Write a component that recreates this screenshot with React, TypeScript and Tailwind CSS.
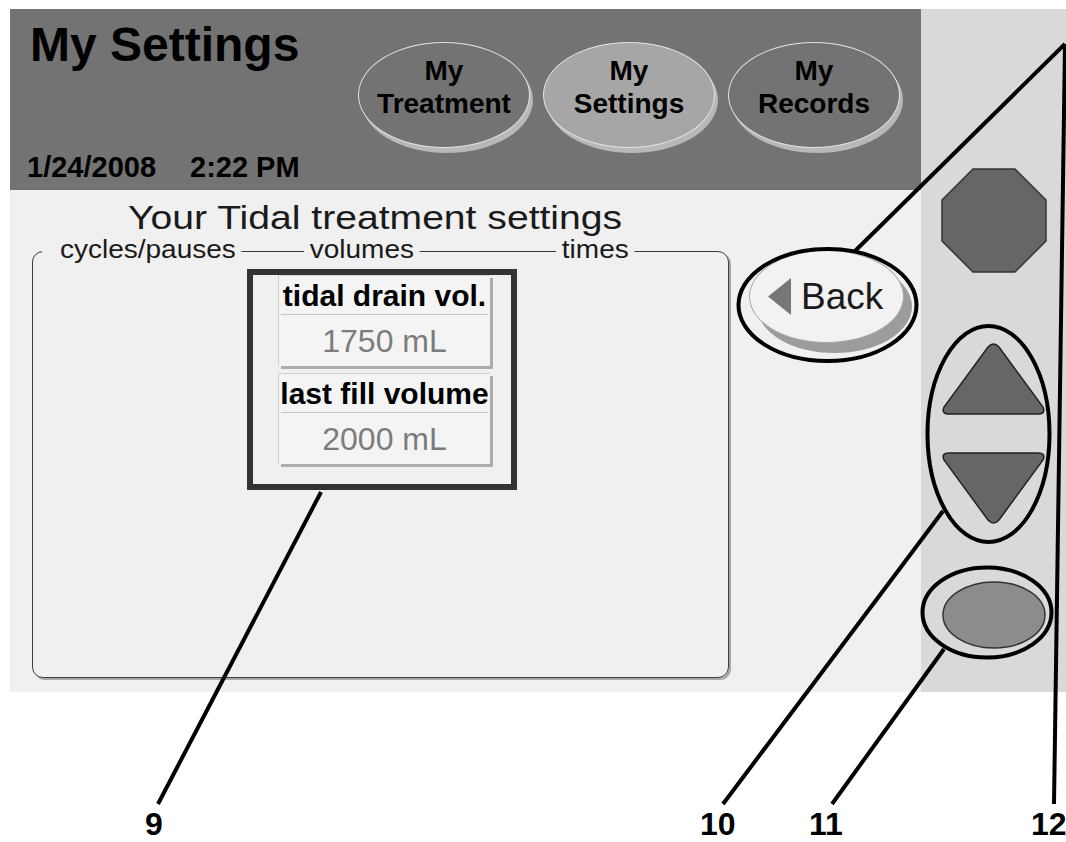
import React from 'react';

const tabs = [
    { top: 'My', bottom: 'Treatment', active: false },
    { top: 'My', bottom: 'Settings', active: true },
    { top: 'My', bottom: 'Records', active: false }
];

const tiles = [
    { label: 'tidal drain vol.', value: '1750 mL' },
    { label: 'last fill volume', value: '2000 mL' }
];

const Tab: React.FC<{ top: string; bottom: string; active: boolean }> = ({ top, bottom, active }) => (
    <div
        className={`w-[172px] h-[106px] rounded-[50%] border border-[#e4e4e4] shadow-[3px_5px_0_#b8b8b8] flex flex-col items-center justify-center pb-4 text-[28px] leading-[33px] font-bold text-black ${active ? 'bg-[#a6a6a6]' : 'bg-[#737373]'}`}
    >
        <span>{top}</span>
        <span>{bottom}</span>
    </div>
);

const SettingTile: React.FC<{ label: string; value: string }> = ({ label, value }) => (
    <div className="w-[212px] bg-[#f4f4f4] border-t border-l border-[#cfcfcf] shadow-[3px_3px_0_#adadad] flex flex-col">
        <div className="h-[38px] flex items-center justify-center text-[30px] font-bold text-black whitespace-nowrap">
            {label}
        </div>
        <div className="h-px bg-[#c4c4c4] mx-[2px]" />
        <div className="h-[51px] flex items-center justify-center text-[32px] text-[#7c7c7c]">{value}</div>
    </div>
);

export default function App() {
    return (
        <div className="relative w-[1066px] h-[842px] bg-white overflow-hidden font-['Liberation_Sans',Arial,sans-serif] text-[#111]">
            <div className="pt-[9px] pl-[10px]">
                <div className="flex w-[1056px] h-[683px]">
                    {/* Device screen */}
                    <div className="w-[911px] flex flex-col">
                        {/* Header */}
                        <div className="h-[181px] bg-[#737373] flex flex-col">
                            <div className="flex items-start">
                                <h1 className="w-[348px] pl-[20px] pt-[12px] text-[48px] leading-[48px] font-bold text-black">
                                    My Settings
                                </h1>
                                <div className="mt-[33px] flex gap-[13px]">
                                    {tabs.map(t => (
                                        <Tab key={t.bottom} {...t} />
                                    ))}
                                </div>
                            </div>
                            <div className="mt-auto pb-[8px] pl-[17px] flex gap-[34px] text-[29px] leading-[29px] font-bold text-black">
                                <span>1/24/2008</span>
                                <span>2:22 PM</span>
                            </div>
                        </div>

                        {/* Content */}
                        <div className="flex-1 bg-[#f0f0f0] flex">
                            <div className="pl-[22px] w-[719px]">
                                <div className="pt-[10px] pl-[96px] text-[34px] leading-[34px] text-[#1a1a1a] whitespace-nowrap">
                                    <span className="inline-block origin-left scale-x-[1.15]">Your Tidal treatment settings</span>
                                </div>
                                <div className="mt-[17px] h-[427px] border border-[#3c3c3c] rounded-[11px] shadow-[2px_2px_0_#a8a8a8]">
                                    <div className="flex -mt-[15px] ml-[9px] origin-left scale-x-[1.12] text-[25px] leading-[25px] text-[#1a1a1a] whitespace-nowrap">
                                        <span className="bg-[#f0f0f0] pl-[16px] pr-[5px]">cycles/pauses</span>
                                        <span className="w-[56px]" />
                                        <span className="bg-[#f0f0f0] px-[5px]">volumes</span>
                                        <span className="w-[122px]" />
                                        <span className="bg-[#f0f0f0] px-[5px]">times</span>
                                    </div>
                                    <div className="ml-[214px] mt-[7px] w-[270px] h-[221px] border-[6px] border-[#333] pl-[25px] flex flex-col gap-[7px]">
                                        {tiles.map(t => (
                                            <SettingTile key={t.label} {...t} />
                                        ))}
                                    </div>
                                </div>
                            </div>
                            <div className="pl-[20px] pt-[60px]">
                                <div className="w-[155px] h-[93px] rounded-[50%] border border-[#a8a8a8] bg-[#f2f2f2] shadow-[8px_10px_0_#9c9c9c] flex items-center pl-[18px] gap-[10px]">
                                    <svg width="23" height="37" viewBox="0 0 23 37">
                                        <polygon points="23,0 23,37 0,18.5" fill="#777" />
                                    </svg>
                                    <span className="text-[37px] leading-none text-[#1a1a1a]">Back</span>
                                </div>
                            </div>
                        </div>
                    </div>

                    {/* Hardware keys */}
                    <div className="w-[145px] bg-[#d9d9d9] flex flex-col items-center">
                        <svg className="mt-[159px]" width="106" height="105" viewBox="0 0 106 105">
                            <polygon
                                points="32,1 74,1 105,32 105,73 74,104 32,104 1,73 1,32"
                                fill="#666"
                                stroke="#333"
                                strokeWidth="1.5"
                                strokeLinejoin="round"
                            />
                        </svg>
                        <svg className="mt-[70px]" width="105" height="72" viewBox="0 0 105 72">
                            <path d="M47 4 Q52.5 -2 58 4 L102 64 Q105 71 97 71 L8 71 Q0 71 3 64 Z" fill="#666" stroke="#222" strokeWidth="1.5" />
                        </svg>
                        <svg className="mt-[37px]" width="105" height="72" viewBox="0 0 105 72">
                            <path d="M47 68 Q52.5 74 58 68 L102 8 Q105 1 97 1 L8 1 Q0 1 3 8 Z" fill="#666" stroke="#222" strokeWidth="1.5" />
                        </svg>
                        <svg className="mt-[57px]" width="104" height="68" viewBox="0 0 104 68">
                            <ellipse cx="52" cy="34" rx="51" ry="33" fill="#8c8c8c" stroke="#333" strokeWidth="1.5" />
                        </svg>
                    </div>
                </div>
            </div>

            {/* Callout annotations */}
            <svg className="absolute inset-0 pointer-events-none" width="1066" height="842" viewBox="0 0 1066 842">
                <g fill="none" stroke="#000" strokeWidth="4">
                    <ellipse cx="827.5" cy="305" rx="89" ry="56" />
                    <ellipse cx="988.5" cy="434" rx="61" ry="108" />
                    <ellipse cx="987" cy="612.5" rx="64.5" ry="45" />
                    <line x1="321" y1="492" x2="158" y2="804" />
                    <line x1="943" y1="511" x2="723" y2="804" />
                    <line x1="944" y1="649" x2="832" y2="804" />
                    <line x1="1054" y1="804" x2="1065" y2="44" />
                    <line x1="1065" y1="44" x2="855" y2="251" />
                </g>
            </svg>
            <span className="absolute left-[145px] top-[808px] text-[32px] leading-none font-bold text-black">9</span>
            <span className="absolute left-[700px] top-[808px] text-[32px] leading-none font-bold text-black">10</span>
            <span className="absolute left-[809px] top-[808px] text-[32px] leading-none font-bold text-black">11</span>
            <span className="absolute left-[1031px] top-[808px] text-[32px] leading-none font-bold text-black">12</span>
        </div>
    );
}
